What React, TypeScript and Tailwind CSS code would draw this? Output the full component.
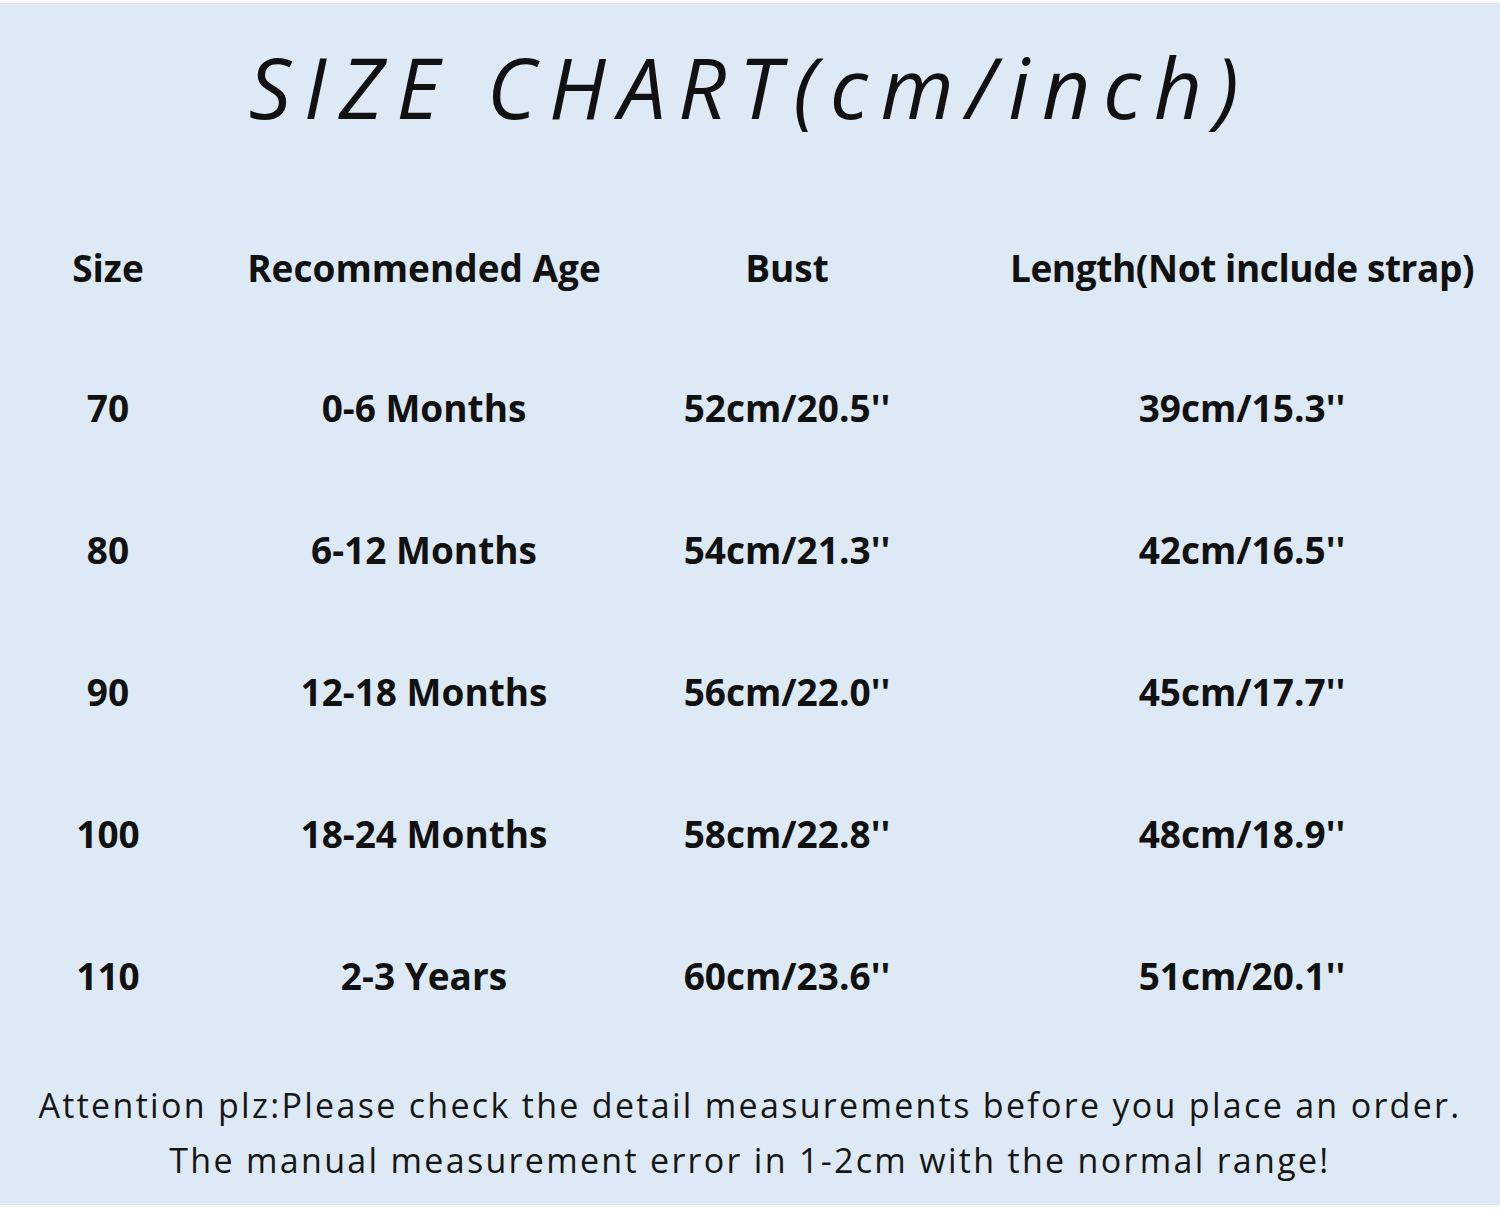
const rows = [
  { size: '70', age: '0-6 Months', bust: "52cm/20.5''", length: "39cm/15.3''" },
  { size: '80', age: '6-12 Months', bust: "54cm/21.3''", length: "42cm/16.5''" },
  { size: '90', age: '12-18 Months', bust: "56cm/22.0''", length: "45cm/17.7''" },
  { size: '100', age: '18-24 Months', bust: "58cm/22.8''", length: "48cm/18.9''" },
  { size: '110', age: '2-3 Years', bust: "60cm/23.6''", length: "51cm/20.1''" },
];

function Row({ cells, header }: { cells: string[]; header?: boolean }) {
  return (
    <div
      className={`grid grid-cols-[216px_416px_310px_1fr] items-center ${header ? 'h-[138px]' : 'h-[142px]'}`}
    >
      <div className="text-center">{cells[0]}</div>
      <div className="text-center">{cells[1]}</div>
      <div className="text-center">{cells[2]}</div>
      <div className={`text-center pl-[42px] whitespace-nowrap ${header ? 'tracking-[-0.4px]' : ''}`}>
        {cells[3]}
      </div>
    </div>
  );
}

export default function App() {
  return (
    <div className="w-[1500px] h-[1209px] bg-white pt-[3px] overflow-hidden">
      <div className="h-[1202px] bg-[#dde9f4] text-[#111111] flex flex-col">
        {/* Title */}
        <div className="h-[195px] flex items-center justify-center">
          <h1
            className="text-[84px] italic font-normal tracking-[0.15em] -mt-[28px] leading-none whitespace-nowrap"
            style={{ fontFamily: '"Open Sans", sans-serif' }}
          >
            SIZE CHART(cm/inch)
          </h1>
        </div>

        {/* Table */}
        <div
          className="text-[37px] font-bold leading-none"
          style={{ fontFamily: '"Open Sans", sans-serif' }}
        >
          <Row header cells={['Size', 'Recommended Age', 'Bust', 'Length(Not include strap)']} />
          {rows.map((r) => (
            <Row key={r.size} cells={[r.size, r.age, r.bust, r.length]} />
          ))}
        </div>

        {/* Note */}
        <div
          className="mt-[32px] text-center text-[34px] tracking-[2.3px] leading-[55px] text-[#161616] whitespace-nowrap"
          style={{ fontFamily: '"Open Sans", sans-serif' }}
        >
          <p>Attention plz:Please check the detail measurements before you place an order.</p>
          <p>The manual measurement error in 1-2cm with the normal range!</p>
        </div>
      </div>
    </div>
  );
}
